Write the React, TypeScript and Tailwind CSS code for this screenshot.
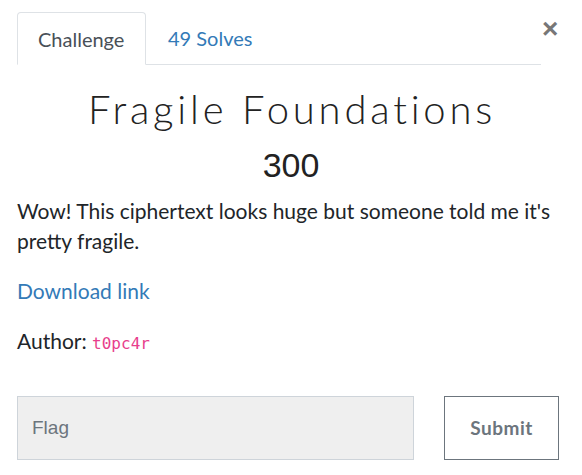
export default function App() {
  return (
    <div className="w-[582px] h-[475px] bg-white font-['Lato',sans-serif] text-[#212529] overflow-hidden">
      <div className="relative pl-[17px] pr-[41px] pt-[12px]">
        <ul className="flex border-b border-[#dee2e6] h-[53px]">
          <li className="w-[129px] h-[53px] border border-[#dee2e6] border-b-white rounded-t-[4px] flex items-center pl-[20px] text-[20px] text-[#495057] bg-white">
            Challenge
          </li>
          <li className="flex items-center pl-[22px] text-[20px] text-[#337ab7]">49 Solves</li>
        </ul>
        <button className="absolute left-[542px] top-[15px] text-[28px] leading-none font-bold text-[#777] font-['Liberation_Sans',sans-serif]">
          ×
        </button>
      </div>

      <div className="px-[17px]">
        <h3 className="mt-[20px] pl-[2px] text-center text-[40px] leading-[48px] font-light tracking-[3.8px] text-[#222]">
          Fragile Foundations
        </h3>
        <h4 className="mt-[12px] text-center text-[34px] leading-[40px] font-['Liberation_Sans',sans-serif] text-[#222]">
          300
        </h4>
        <p className="mt-[11px] text-[21px] leading-[30px] text-[#212529]">
          Wow! This ciphertext looks huge but someone told me it's pretty fragile.
        </p>
        <p className="mt-[20px] text-[21px] leading-[30px]">
          <a className="text-[#337ab7]" href="#">
            Download link
          </a>
        </p>
        <p className="mt-[20px] text-[21px] leading-[30px]">
          Author: <code className="font-['DejaVu_Sans_Mono',monospace] text-[16px] text-[#e83e8c]">t0pc4r</code>
        </p>

        <div className="mt-[37px] flex">
          <input
            className="w-[397px] h-[64px] bg-[#efefef] border border-[#ced4da] px-[14px] text-[19px] font-['Liberation_Sans',sans-serif] placeholder:text-[#6c757d] outline-none"
            placeholder="Flag"
          />
          <button className="ml-[30px] w-[115px] h-[64px] border border-[#6c757d] text-[#6c757d] text-[19px] tracking-[0.5px] font-bold">
            Submit
          </button>
        </div>
      </div>
    </div>
  );
}
